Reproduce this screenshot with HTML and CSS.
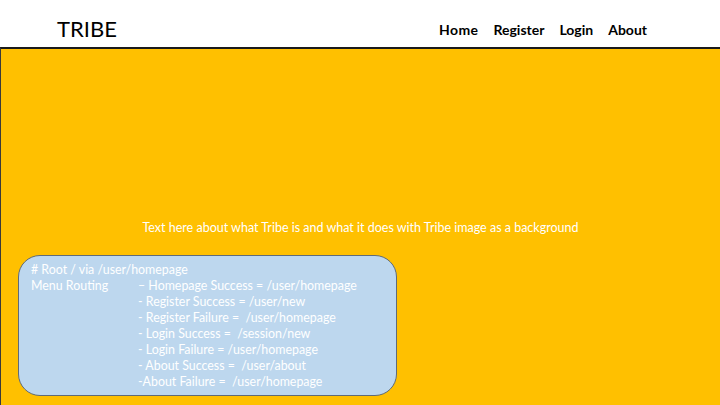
FILE: index.html
```html
<!DOCTYPE html>
<html>
<head>
<meta charset="utf-8">
<link rel="stylesheet" href="styles.css">
</head>
<body>
<header class="topbar">
  <div class="brand">TRIBE</div>
  <nav class="nav">
    <a class="nav-link">Home</a>
    <a class="nav-link">Register</a>
    <a class="nav-link">Login</a>
    <a class="nav-link">About</a>
  </nav>
</header>
<main class="hero">
  <p class="hero-text">Text here about what Tribe is and what it does with Tribe image as a background</p>
  <div class="note">
    <div class="note-line"># Root / via /user/homepage</div>
    <div class="routing">
      <div class="routing-label">Menu Routing</div>
      <div class="routing-list">
        <div>– Homepage Success = /user/homepage</div>
        <div>- Register Success = /user/new</div>
        <div>- Register Failure = &nbsp;/user/homepage</div>
        <div>- Login Success = &nbsp;/session/new</div>
        <div>- Login Failure = /user/homepage</div>
        <div>- About Success = &nbsp;/user/about</div>
        <div>-About Failure = &nbsp;/user/homepage</div>
      </div>
    </div>
  </div>
</main>
</body>
</html>
```
FILE: styles.css
```css
html, body {
  margin: 0;
  padding: 0;
  height: 100%;
}
body {
  font-family: Lato, "Open Sans", sans-serif;
  background: #ffffff;
  display: flex;
  flex-direction: column;
}
.topbar {
  height: 47px;
  display: flex;
  align-items: center;
  justify-content: space-between;
  padding: 10px 73px 0 57px;
  box-sizing: border-box;
}
.brand {
  font-size: 22px;
  color: #000;
}
.nav {
  display: flex;
  gap: 15px;
  padding-top: 1px;
}
.nav-link {
  font-size: 14px;
  font-weight: bold;
  color: #000;
}
.nav-link:first-child {
  letter-spacing: 0.4px;
}
.hero {
  flex: 1;
  background: #ffc000;
  border-top: 2px solid #1a1a1a;
  border-left: 1px solid #3a3a3a;
  display: flex;
  flex-direction: column;
  padding: 0 0 0 17px;
}
.hero-text {
  margin: 171px 0 0;
  color: #ffffff;
  font-size: 12.5px;
  text-align: center;
  padding-right: 17px;
}
.note {
  margin-top: 20px;
  width: 379px;
  height: 141px;
  box-sizing: border-box;
  background: #bdd7ee;
  border: 1px solid #5f6b78;
  border-radius: 22px;
  padding: 6px 12px;
  color: #ffffff;
  font-size: 12.4px;
  line-height: 16px;
}
.routing {
  display: flex;
}
.routing-label {
  width: 107px;
}
```
